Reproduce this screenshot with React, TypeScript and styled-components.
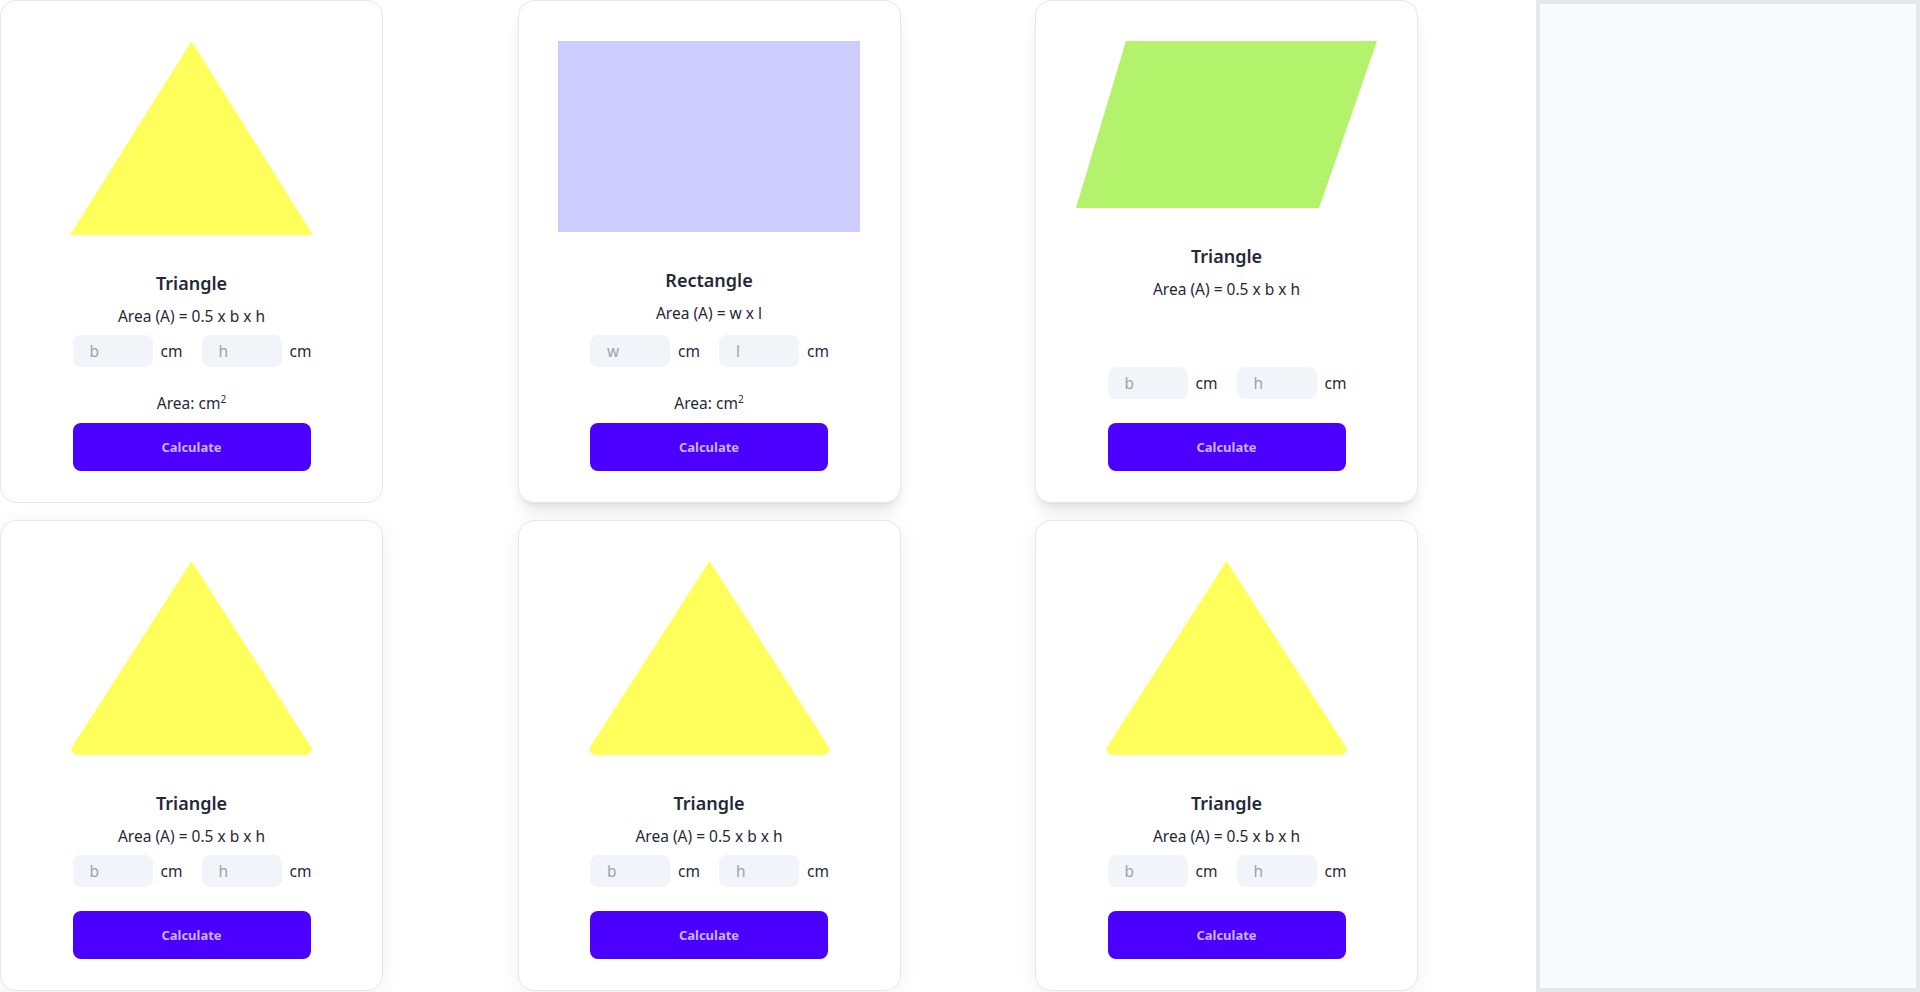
import React from "react";
import styled, { createGlobalStyle, css } from "styled-components";

const GlobalStyle = createGlobalStyle`
  html, body {
    margin: 0;
    padding: 0;
    background: #ffffff;
  }
  body {
    font-family: "Segoe UI", "Noto Sans", "Open Sans", sans-serif;
    color: #1f2937;
  }
  * { box-sizing: border-box; }
`;

const Page = styled.div`
  display: flex;
  width: 100%;
  min-height: 100vh;
`;

const Main = styled.main`
  flex: 1;
`;

const Grid = styled.div`
  display: grid;
  grid-template-columns: 383px 383px 383px;
  column-gap: 134.5px;
  row-gap: 17px;
  align-items: stretch;
`;

const Aside = styled.aside`
  width: 384px;
  height: 100vh;
  flex-shrink: 0;
  background: #f9fafb;
  border: 4px solid #e5e7eb;
`;

type Elevation = "none" | "strong" | "soft";

const Card = styled.div<{ $elevation: Elevation }>`
  display: flex;
  flex-direction: column;
  align-items: center;
  background: #ffffff;
  border: 1px solid #e5e7eb;
  border-radius: 16px;
  padding: 40px 0 31px;
  ${(p) =>
    p.$elevation === "strong" &&
    css`
      box-shadow: 0 10px 15px -3px rgba(0, 0, 0, 0.1),
        0 4px 6px -4px rgba(0, 0, 0, 0.1);
    `}
  ${(p) =>
    p.$elevation === "soft" &&
    css`
      box-shadow: 0 4px 24px rgba(0, 0, 0, 0.06);
    `}
`;

const ShapeBox = styled.div`
  display: flex;
  justify-content: center;
  margin-bottom: 34px;
  svg {
    display: block;
  }
`;

const Title = styled.h2`
  margin: 0;
  font-size: 18px;
  line-height: 28px;
  font-weight: 600;
  color: #1f2937;
`;

const Formula = styled.p`
  margin: 8px 0 0;
  font-size: 15.5px;
  line-height: 22px;
  color: #1f2937;
`;

const Bottom = styled.div`
  margin-top: auto;
  padding-top: 8px;
  width: 238px;
  display: flex;
  flex-direction: column;
  align-items: stretch;
`;

const InputsRow = styled.div`
  display: flex;
  justify-content: space-between;
  align-items: center;
  height: 32px;
`;

const Field = styled.label`
  display: flex;
  align-items: center;
  gap: 8px;
`;

const Input = styled.input`
  width: 80px;
  height: 32px;
  border: none;
  outline: none;
  border-radius: 8px;
  background: #f1f4f9;
  padding: 0 17px;
  font-family: inherit;
  font-size: 15.5px;
  color: #1f2937;
  &::placeholder {
    color: #9ca3af;
  }
`;

const Unit = styled.span`
  font-size: 15.5px;
  color: #1f2937;
  width: 21px;
`;

const Result = styled.p`
  margin: 24px 0 0;
  height: 24px;
  line-height: 24px;
  font-size: 15.5px;
  text-align: center;
  color: #1f2937;
  sup {
    font-size: 10px;
    line-height: 0;
  }
`;

const Button = styled.button<{ $afterResult: boolean }>`
  margin-top: ${(p) => (p.$afterResult ? "8px" : "24px")};
  height: 48px;
  border: none;
  border-radius: 8px;
  background: #4c00ff;
  color: #c8b8ff;
  font-family: inherit;
  font-size: 13px;
  font-weight: 700;
  cursor: pointer;
`;

type ShapeKind = "triangle" | "roundTriangle" | "rectangle" | "parallelogram";

const Shape = ({ kind }: { kind: ShapeKind }) => {
  if (kind === "rectangle") {
    return (
      <svg width="302" height="191" viewBox="0 0 302 191">
        <rect x="0" y="0" width="302" height="191" fill="#ccccff" />
      </svg>
    );
  }
  if (kind === "parallelogram") {
    return (
      <svg width="301" height="167" viewBox="0 0 301 167">
        <polygon points="50,0 301,0 243,167 0,167" fill="#b3f26b" />
      </svg>
    );
  }
  if (kind === "roundTriangle") {
    return (
      <svg width="243" height="194" viewBox="0 0 243 194">
        <path
          d="M121.5 0 L241 186 Q243.5 191 236 194 L7 194 Q-0.5 191 2 186 Z"
          fill="#ffff5c"
        />
      </svg>
    );
  }
  return (
    <svg width="243" height="194" viewBox="0 0 243 194">
      <polygon points="121.5,0 243,194 0,194" fill="#ffff5c" />
    </svg>
  );
};

type CardData = {
  shape: ShapeKind;
  title: string;
  formula: string;
  fields: [string, string];
  showResult: boolean;
  elevation: Elevation;
};

const cards: CardData[] = [
  { shape: "triangle", title: "Triangle", formula: "Area (A) = 0.5 x b x h", fields: ["b", "h"], showResult: true, elevation: "none" },
  { shape: "rectangle", title: "Rectangle", formula: "Area (A) = w x l", fields: ["w", "l"], showResult: true, elevation: "strong" },
  { shape: "parallelogram", title: "Triangle", formula: "Area (A) = 0.5 x b x h", fields: ["b", "h"], showResult: false, elevation: "strong" },
  { shape: "roundTriangle", title: "Triangle", formula: "Area (A) = 0.5 x b x h", fields: ["b", "h"], showResult: false, elevation: "soft" },
  { shape: "roundTriangle", title: "Triangle", formula: "Area (A) = 0.5 x b x h", fields: ["b", "h"], showResult: false, elevation: "soft" },
  { shape: "roundTriangle", title: "Triangle", formula: "Area (A) = 0.5 x b x h", fields: ["b", "h"], showResult: false, elevation: "soft" },
];

const ShapeCard = ({ data }: { data: CardData }) => (
  <Card $elevation={data.elevation}>
    <ShapeBox>
      <Shape kind={data.shape} />
    </ShapeBox>
    <Title>{data.title}</Title>
    <Formula>{data.formula}</Formula>
    <Bottom>
      <InputsRow>
        {data.fields.map((f) => (
          <Field key={f}>
            <Input type="text" placeholder={f} />
            <Unit>cm</Unit>
          </Field>
        ))}
      </InputsRow>
      {data.showResult && (
        <Result>
          Area: cm<sup>2</sup>
        </Result>
      )}
      <Button $afterResult={data.showResult}>Calculate</Button>
    </Bottom>
  </Card>
);

export default function App() {
  return (
    <>
      <GlobalStyle />
      <Page>
        <Main>
          <Grid>
            {cards.map((c, i) => (
              <ShapeCard key={i} data={c} />
            ))}
          </Grid>
        </Main>
        <Aside />
      </Page>
    </>
  );
}
